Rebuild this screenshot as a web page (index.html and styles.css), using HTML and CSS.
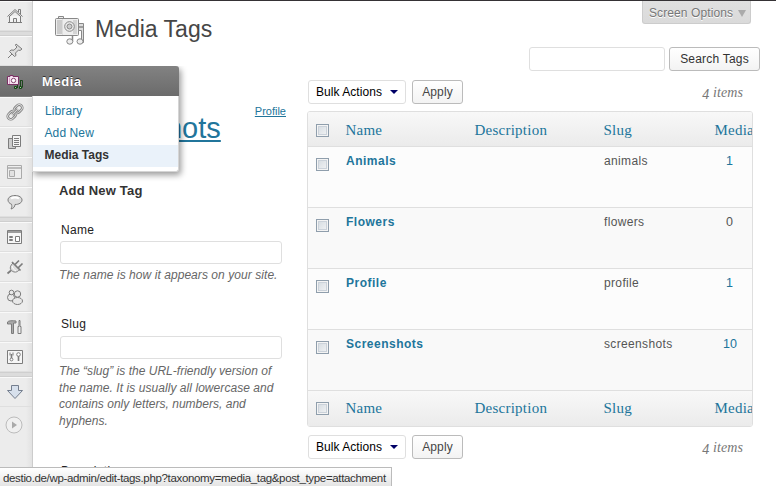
FILE: index.html
```
<!DOCTYPE html>
<html lang="en">
<head>
<meta charset="utf-8">
<title>Media Tags</title>
<link rel="stylesheet" href="styles.css">
</head>
<body>
<div class="adminbar"></div>
<div class="app">
  <nav class="sidebar">
    <a class="item"><svg viewBox="0 0 18 18"><path d="M3.500 9v6.500h4v-4h3v4h4V9" fill="#f4f4f4"/><path d="M1.500 9.500 9 2.500l7.500 7M12.500 5V2.500h2V7M4 9l5-4.500L14 9" fill="none"/><path d="M2 15.500h14"/></svg></a>
    <div class="sep"></div>
    <a class="item"><svg viewBox="0 0 18 18"><path d="m10 2 6 5-2 1.500-1.500-.5-3 3 .5 2.500-1.500 1-5-5L5 8l3 .2 3-3.200L9.500 3.500z" fill="#ddd"/><path d="M6 12 2 16"/></svg></a>
    <a class="item current"><svg viewBox="0 0 18 18"><path d="M1.500 3.500H4v-1h3v1h5.500v8h-11z" fill="#f6e3f1" stroke="#7b3164"/><circle cx="7.500" cy="7.500" r="2.200" fill="#fff" stroke="#86446f"/><path d="M3.500 4.500v6.500" stroke="#dba3c9"/><path d="M14.500 7v7M11.500 12v3M14 7.500h2.500v7" stroke="#1d461d"/><path d="M8.500 13.500h2v2h-2zM13.500 13.500h2v2h-2z" fill="#8cf08c" stroke="#193e19"/></svg></a>
    <a class="item"><svg viewBox="0 0 18 18"><g transform="rotate(-45 9 9)" fill="none"><rect x="0" y="6" width="9" height="6" rx="3" stroke-width="2.600"/><rect x="9" y="6" width="9" height="6" rx="3" stroke-width="2.600"/><rect x="0" y="6" width="9" height="6" rx="3" stroke="#ddd"/><rect x="9" y="6" width="9" height="6" rx="3" stroke="#ddd"/><path d="M5 9h8" stroke-width="2.500"/><path d="M5 9h8" stroke="#ddd"/></g></svg></a>
    <a class="item"><svg viewBox="0 0 18 18"><path d="M2.500 5.500h7v10h-7z" fill="#ccc"/><path d="M6.500 2.500h8v11h-8z" fill="#f4f4f4"/><path d="M8 5.500h5M8 7.500h5M8 9.500h5M8 11.500h5"/></svg></a>
    <a class="item faint"><svg viewBox="0 0 18 18"><path d="M1.500 2.500h14v13h-14z" fill="#eee"/><path d="M2 5h13" stroke-width="2" stroke="#bbb"/><path d="M3.500 7.500h5v6h-5z" fill="#e2e2e2"/></svg></a>
    <a class="item"><svg viewBox="0 0 18 18"><path d="M9 2.500c4 0 7 1.800 7 4.500s-3 4.500-7 4.500c0 2-1.500 4-4 4.500 1-1.500 1-3 .5-4.800C3.500 10.500 2 9 2 7c0-2.700 3-4.500 7-4.500z" fill="#ddd"/><path d="M5 5.500c2-1.500 6-1.500 8 0" stroke="#fff" stroke-width="2" fill="none"/></svg></a>
    <div class="sep"></div>
    <a class="item"><svg viewBox="0 0 18 18"><path d="M1.500 2.500h14v13h-14z" fill="#f6f6f6"/><path d="M2 4h13" stroke-width="1.500"/><path d="M3.500 8.500h3v1h-3zM3.500 11.500h3v1h-3zM9.500 8.500h4v5h-4z" fill="#fff"/></svg></a>
    <a class="item"><svg viewBox="0 0 18 18"><path d="m7 5 6.500 6.500C11 15 7.500 14.500 5.500 12.500S4 8 7 5z" fill="#ddd"/><path d="m6 4 8.500 8.500M9 6.500l4-4M12.500 9.500l4-4M5 12.500l-3.500 3" stroke-width="1.700" fill="none"/><path d="M6 8c1 3 2 4 4 5" fill="none" stroke="#fff"/></svg></a>
    <a class="item"><svg viewBox="0 0 18 18"><g fill="#e8e8e8"><ellipse cx="5" cy="9.500" rx="3.500" ry="3.500"/><circle cx="5.500" cy="4.500" r="2.300"/><ellipse cx="11.500" cy="13" rx="5" ry="3.500"/><circle cx="11.500" cy="6" r="3.200"/></g></svg></a>
    <a class="item"><svg viewBox="0 0 18 18"><path d="M1.500 6V4c1-1.500 5-1.500 8.500-1v2H7.500v10.500h-2V6h-2z" fill="#aaa"/><path d="M13 2.500v6h-1v7h3v-7h-1v-6z" fill="#eee"/></svg></a>
    <a class="item"><svg viewBox="0 0 18 18"><path d="M1.500 2.500h15v13h-15z" fill="#f6f6f6"/><path d="M5.500 6v5M12.500 7v6" stroke-width="1.600"/><circle cx="5.500" cy="11.500" r="1.400" fill="#fff"/><circle cx="12.500" cy="6.500" r="1.800" fill="#fff"/><path d="M4 4.500v3M7 4.500v3"/></svg></a>
    <div class="sep"></div>
    <a class="item"><svg viewBox="0 0 18 18"><path d="M5.500 2.500h7v5h4L9 15.500 1.500 7.500h4z" fill="#d7e0ec" stroke="#747e8e"/></svg></a>
    <a class="item collapse"><svg viewBox="0 0 18 18"><circle cx="9" cy="9" r="8" fill="#f0f0f0" stroke="#bcbcbc"/><path d="m7 5.500 5 3.500-5 3.500z" fill="#aaa" stroke="none"/></svg></a>
  </nav>

  <section class="flyout">
    <h3>Media</h3>
    <ul>
      <li class="library">Library</li>
      <li>Add New</li>
      <li class="active">Media Tags</li>
    </ul>
  </section>

  <main class="content">
    <header class="top">
      <svg class="media-icon" viewBox="0 0 32 34"><g fill="#eee" stroke="#888"><path d="M4.500 5V3.500h5V5" /><path d="M2.500 5.500h21q1 0 1 1v15q0 1-1 1h-21q-1 0-1-1v-15q0-1 1-1z"/><path d="M3 7h5v14H3z" fill="#ccc" stroke="none"/><path d="M8.500 6v16" stroke="#ddd"/><path d="M19 7h4v14h-4z" fill="#d4d4d4" stroke="none"/><circle cx="15.500" cy="13.500" r="4.800"/><circle cx="15.500" cy="13.500" r="2.500" fill="#ccc"/><path d="M24.500 10.500h5v19h-2v-12h-3z" fill="#ddd"/><path d="M24.500 14h5M18.500 22.500v6" stroke-width="1.500"/><ellipse cx="15.800" cy="28.500" rx="3" ry="2.700"/><ellipse cx="26" cy="28.500" rx="3" ry="2.700"/></g></svg>
      <h1>Media Tags</h1>
      <div class="screen-options">Screen Options <i></i></div>
    </header>
    <div class="search"><input type="text" aria-label="Search"><button class="btn search-btn">Search Tags</button></div>
    <div class="columns">
      <div class="left">
        <div class="cloud"><a class="big">Screenshots</a><a class="small">Profile</a></div>
        <h2>Add New Tag</h2>
        <label class="l-name">Name</label>
        <input type="text" aria-label="Name">
        <p class="p-name">The name is how it appears on your site.</p>
        <label class="l-slug">Slug</label>
        <input type="text" aria-label="Slug">
        <p class="p-slug">The “slug” is the URL-friendly version of<br><span class="tight">the name. It is usually all lowercase and</span><br>contains only letters, numbers, and<br>hyphens.</p>
        <label class="l-desc">Description</label>
      </div>
      <div class="right">
        <div class="tablenav"><div class="select">Bulk Actions<i></i></div><button class="btn apply">Apply</button><span class="count"><b>4</b> items</span></div>
        <div class="table">
          <div class="row head"><i class="cb"></i><span class="name">Name</span><span class="desc">Description</span><span class="slug">Slug</span><span class="num">Media</span></div>
          <div class="row"><i class="cb"></i><span class="name">Animals</span><span></span><span class="slug">animals</span><span class="num">1</span></div>
          <div class="row alt"><i class="cb"></i><span class="name">Flowers</span><span></span><span class="slug">flowers</span><span class="num zero">0</span></div>
          <div class="row"><i class="cb"></i><span class="name">Profile</span><span></span><span class="slug">profile</span><span class="num">1</span></div>
          <div class="row alt"><i class="cb"></i><span class="name">Screenshots</span><span></span><span class="slug">screenshots</span><span class="num ten">10</span></div>
          <div class="row head foot"><i class="cb"></i><span class="name">Name</span><span class="desc">Description</span><span class="slug">Slug</span><span class="num">Media</span></div>
        </div>
        <div class="tablenav bottom"><div class="select">Bulk Actions<i></i></div><button class="btn apply">Apply</button><span class="count"><b>4</b> items</span></div>
      </div>
    </div>
  </main>
</div>
<div class="status">destio.de/wp-admin/edit-tags.php?taxonomy=media_tag&amp;post_type=attachment</div>
</body>
</html>
```
FILE: styles.css
```
* { box-sizing: border-box; }
html, body { margin: 0; height: 486px; overflow: hidden; }
body { position: relative; background: #fff; color: #333; font: 12px/18px "Liberation Sans", Arial, sans-serif; }
h1, h2, h3, p, ul { margin: 0; padding: 0; font-weight: normal; }
ul { list-style: none; }
.adminbar { height: 1px; background: #353235; }
.app { display: flex; height: 485px; position: relative; }

.sidebar { width: 33px; flex: none; background: linear-gradient(90deg, #ececec 26px, #e2e2e2 32px); border-right: 1px solid #ccc; display: flex; flex-direction: column; }
.item { height: 30px; flex: none; border-top: 1px solid #f9f9f9; border-bottom: 1px solid #dfdfdf; display: flex; align-items: center; padding-left: 6px; }
.item svg { width: 18px; height: 18px; flex: none; stroke: #7c7c7c; fill: none; }
.item.faint svg { stroke: #aaa; }
.item.current { height: 31px; background: linear-gradient(#828282, #6b6b6b); border-color: #808080; width: 33px; }
.item.collapse { border-color: transparent; height: 35px; padding-left: 5px; }
.sep { height: 5px; flex: none; background: #dcdcdc; border-top: 1px solid #cfcfcf; border-bottom: 1px solid #cfcfcf; }

.flyout { position: absolute; left: 32px; top: 65px; width: 147px; height: 106px; background: #fff; border: 1px solid #d5d5d5; border-width: 0 1px 1px; border-radius: 0 3px 3px 0; box-shadow: 2px 3px 6px rgba(0,0,0,.4); z-index: 3; clip-path: inset(0 -12px -12px 0); }
.flyout h3 { height: 30px; margin: 0 -1px; padding-left: 10px; font-size: 13px; line-height: 31px; font-weight: bold; letter-spacing: .6px; color: #fff; text-shadow: 0 -1px 0 #333; background: linear-gradient(#828282, #6b6b6b); border-radius: 0 3px 0 0; }
.flyout ul { padding-top: 5px; }
.flyout li { height: 22px; line-height: 21px; padding-left: 11.500px; color: #21759b; letter-spacing: .1px; }
.flyout .library { padding-left: 12px; }
.flyout .active { background: #eaf2fa; color: #333; font-weight: bold; letter-spacing: 0; }

.content { flex: 1; min-width: 0; padding-left: 22px; }
.top { height: 46px; display: flex; align-items: flex-start; }
.media-icon { width: 32px; height: 34px; margin-top: 12px; margin-left: -1px; }
h1 { margin: 14px 0 0 9px; font-size: 23px; line-height: 28px; color: #464646; }
.screen-options { margin-left: auto; margin-right: 25px; width: 109px; height: 23px; padding: 0 0 0 6px; border: 1px solid #ccc; border-top: 0; border-radius: 0 0 3px 3px; background: linear-gradient(#e0e0e0, #dadada); color: #777; line-height: 24px; white-space: nowrap; letter-spacing: .1px; text-shadow: 0 1px 0 #fff; }
.screen-options i { display: inline-block; border: 4px solid transparent; border-top: 7px solid #aaa; border-bottom: 0; margin-left: 1px; }
input { display: block; width: 222px; height: 23px; border: 1px solid #dfdfdf; border-radius: 3px; background: #fff; padding: 0; }
.search { display: flex; justify-content: flex-end; gap: 4px; padding-right: 16px; }
.search input { width: 136px; height: 24px; }
.btn { height: 24px; padding: 0; border: 1px solid #bbb; border-radius: 3px; background: linear-gradient(#fff, #f3f3f3); color: #333; font: 12px/22px "Liberation Sans", Arial, sans-serif; white-space: nowrap; }
.search-btn { width: 91px; letter-spacing: .2px; }

.columns { display: flex; padding-top: 9px; }
.left { width: 252px; flex: none; display: flex; flex-direction: column; padding-left: 4px; }
.cloud { height: 102px; display: flex; align-items: flex-start; justify-content: flex-end; padding-right: 21px; color: #21759b; }
.cloud a { text-decoration: underline; }
.cloud .big { font-size: 29px; line-height: 34px; margin: 31px 34px 0 0; }
.cloud .small { font-size: 11px; margin-top: 22px; line-height: 18px; }
h2 { font-size: 13px; line-height: 18px; font-weight: bold; letter-spacing: .2px; }
label { color: #222; margin-left: 2px; letter-spacing: .3px; }
.left input { margin-left: 1px; }
.l-name { margin-top: 21px; margin-bottom: 2px; }
.p-name { letter-spacing: .06px; margin-top: 2px; }
.left p { color: #666; font-style: italic; white-space: nowrap; }
.l-slug { margin-top: 31px; margin-bottom: 3px; }
.p-slug { line-height: 16.700px; margin-top: 4px; letter-spacing: .02px; }
.tight { letter-spacing: .06px; }
.l-desc { margin-top: 32px; }

.right { flex: 1; min-width: 0; }
.tablenav { display: flex; height: 24px; align-items: flex-start; padding-left: 1px; }
.select { width: 98px; height: 24px; border: 1px solid #dfdfdf; border-radius: 3px; padding-left: 7px; line-height: 22px; color: #000; display: flex; align-items: center; white-space: nowrap; letter-spacing: .05px; }
.select i { margin-left: 8px; border: 4px solid transparent; border-top-color: #006; border-bottom: 0; }
.apply { width: 51px; margin-left: 6px; color: #464646; letter-spacing: .1px; }
.count { margin-left: auto; margin-right: 33px; font: italic 14px/25px "Liberation Serif", serif; color: #777; letter-spacing: .1px; }
.count b { font-weight: normal; position: relative; top: 2px; }
.table { width: 446px; height: 316px; margin-top: 7px; border: 1px solid #dfdfdf; border-radius: 3px; overflow: hidden; }
.row { display: grid; grid-template-columns: 38px 129px 129px 111px 60px; height: 61px; border-bottom: 1px solid #dfdfdf; background: #fcfcfc; }
.row.alt { background: #f9f9f9; }
.row > span { line-height: 18px; padding-top: 5px; }
.row .name { color: #21759b; font-weight: bold; letter-spacing: .5px; }
.row .slug { color: #555; letter-spacing: .35px; }
.row .num { color: #21759b; padding-left: 11px; font-size: 12.500px; }
.row .num.zero { color: #555; }
.row .num.ten { padding-left: 8px; }
.cb { width: 13px; height: 13px; margin: 11px 0 0 8px; border: 1px solid #8f9eac; background: linear-gradient(135deg, #d2d9df, #f4f5f6); box-shadow: inset 0 0 0 1px #f4f4f4, inset 0 0 0 2px #cbd2da; }
.row.head { height: 35px; background: linear-gradient(#f8f8f8, #ebebeb); }
.row.foot { border-bottom: 0; }
.row.head > span { padding: 0; margin-left: -.6px; font: 15px/37px "Liberation Serif", serif; color: #21759b; letter-spacing: .25px; }
.row.head .cb { margin-top: 12px; }
.row.foot .cb { margin-top: 11px; }
.row.foot > span { line-height: 35px; }
.bottom { margin-top: 8px; }

.status { position: absolute; left: 0; bottom: 0; width: 392px; height: 19px; z-index: 5; border: 1px solid #bbb; border-left: 0; border-bottom: 0; background: linear-gradient(#fff, #e4e4e4); color: #333; font-size: 11.500px; letter-spacing: -.34px; line-height: 20px; padding-left: 3px; white-space: nowrap; }
```
